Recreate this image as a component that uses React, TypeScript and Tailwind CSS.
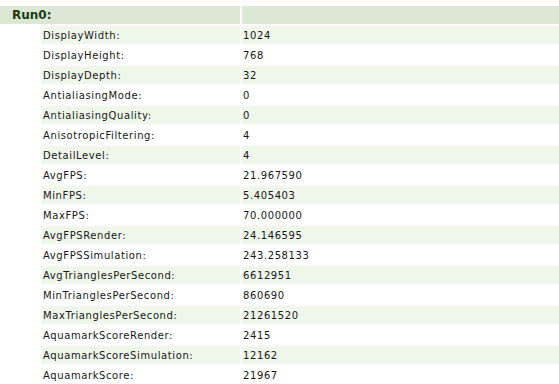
const rows: [string, string][] = [
  ["DisplayWidth", "1024"],
  ["DisplayHeight", "768"],
  ["DisplayDepth", "32"],
  ["AntialiasingMode", "0"],
  ["AntialiasingQuality", "0"],
  ["AnisotropicFiltering", "4"],
  ["DetailLevel", "4"],
  ["AvgFPS", "21.967590"],
  ["MinFPS", "5.405403"],
  ["MaxFPS", "70.000000"],
  ["AvgFPSRender", "24.146595"],
  ["AvgFPSSimulation", "243.258133"],
  ["AvgTrianglesPerSecond", "6612951"],
  ["MinTrianglesPerSecond", "860690"],
  ["MaxTrianglesPerSecond", "21261520"],
  ["AquamarkScoreRender", "2415"],
  ["AquamarkScoreSimulation", "12162"],
  ["AquamarkScore", "21967"],
];

export default function App() {
  return (
    <div
      className="w-[559px] h-[384px] overflow-hidden bg-white pt-[6px] flex flex-col gap-[2px] text-[10px] text-[#161616] tracking-[0.6px]"
      style={{ fontFamily: '"DejaVu Sans", Verdana, sans-serif' }}
    >
      {/* header */}
      <div className="flex gap-[2px] h-[18px]">
        <div className="w-[240px] shrink-0 bg-[#dce8d3] flex items-center pl-[12px] text-[12px] font-bold tracking-normal text-[#1e3a12]">
          Run0:
        </div>
        <div className="flex-1 bg-[#dce8d3]" />
      </div>

      {rows.map(([label, value], i) => {
        const bg = i % 2 === 0 ? "bg-[#eff7ea]" : "bg-white";
        return (
          <div key={label} className="flex gap-[2px] h-[18px]">
            <div className="w-[39px] shrink-0" />
            <div className={`w-[199px] shrink-0 ${bg} flex items-center pl-[2px]`}>
              {label}:
            </div>
            <div className={`flex-1 ${bg} flex items-center pl-[1px]`}>
              {value}
            </div>
          </div>
        );
      })}
    </div>
  );
}
